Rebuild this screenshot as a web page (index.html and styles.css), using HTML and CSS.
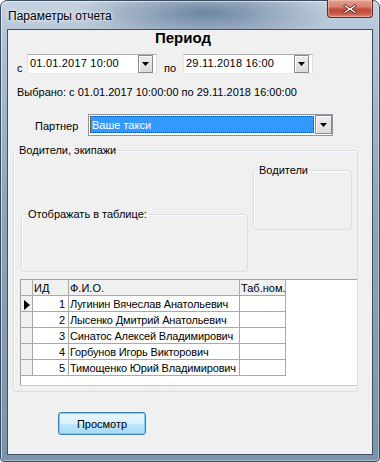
FILE: index.html
```html
<!DOCTYPE html>
<html lang="ru">
<head>
<meta charset="utf-8">
<title>Параметры отчета</title>
<link rel="stylesheet" href="styles.css">
</head>
<body>
<div class="window">
  <div class="titlebar">
    <span class="title">Параметры отчета</span>
    <div class="close">
      <svg width="16" height="12" viewBox="0 0 16 12"><path d="M3 1.5 L8 5 L13 1.5 L14.5 2.8 L10.2 6 L14.5 9.2 L13 10.5 L8 7 L3 10.5 L1.5 9.2 L5.8 6 L1.5 2.8 Z" fill="#fff" stroke="#4a1f1a" stroke-width="0.9" stroke-linejoin="round"/></svg>
    </div>
  </div>
  <div class="client">
    <div class="heading">Период</div>
    <div class="daterow">
      <span class="lbl lbl-from">с</span>
      <div class="picker">
        <span class="ptext">01.01.2017 10:00</span>
        <span class="dbtn"><svg width="7" height="4" viewBox="0 0 7 4"><path d="M0 0H7L3.5 4Z" fill="#000"/></svg></span>
      </div>
      <span class="lbl lbl-to">по</span>
      <div class="picker">
        <span class="ptext">29.11.2018 16:00</span>
        <span class="dbtn"><svg width="7" height="4" viewBox="0 0 7 4"><path d="M0 0H7L3.5 4Z" fill="#000"/></svg></span>
      </div>
    </div>
    <div class="selected">Выбрано: с 01.01.2017 10:00:00 по 29.11.2018 16:00:00</div>
    <div class="partnerrow">
      <span class="lbl lbl-partner">Партнер</span>
      <div class="combo">
        <span class="csel">Ваше такси</span>
        <span class="dbtn cbtn"><svg width="7" height="4" viewBox="0 0 7 4"><path d="M0 0H7L3.5 4Z" fill="#000"/></svg></span>
      </div>
    </div>
    <fieldset class="group main">
      <legend>Водители, экипажи</legend>
      <div class="upper">
        <fieldset class="group show">
          <legend>Отображать в таблице:</legend>
        </fieldset>
        <fieldset class="group drivers">
          <legend>Водители</legend>
        </fieldset>
      </div>
      <div class="grid">
        <div class="tbl">
          <div class="c hd ind"></div><div class="c hd">ИД</div><div class="c hd">Ф.И.О.</div><div class="c hd">Таб.ном.</div>
          <div class="c ind"><svg width="6" height="10" viewBox="0 0 6 10"><path d="M0 0L6 5L0 10Z" fill="#000"/></svg></div><div class="c num">1</div><div class="c name">Лугинин Вячеслав Анатольевич</div><div class="c"></div>
          <div class="c ind"></div><div class="c num">2</div><div class="c name">Лысенко Дмитрий Анатольевич</div><div class="c"></div>
          <div class="c ind"></div><div class="c num">3</div><div class="c name">Синатос Алексей Владимирович</div><div class="c"></div>
          <div class="c ind"></div><div class="c num">4</div><div class="c name">Горбунов Игорь Викторович</div><div class="c"></div>
          <div class="c ind"></div><div class="c num">5</div><div class="c name">Тимощенко Юрий Владимирович</div><div class="c"></div>
        </div>
      </div>
    </fieldset>
    <button class="btn">Просмотр</button>
  </div>
</div>
</body>
</html>
```
FILE: styles.css
```css
html, body {
  margin: 0;
  padding: 0;
}
body {
  width: 380px;
  height: 462px;
  overflow: hidden;
  font-family: "Liberation Sans", Arial, sans-serif;
  font-size: 11px;
  color: #000;
  background: #fff;
}
.window {
  box-sizing: border-box;
  width: 380px;
  height: 462px;
  border: 1px solid #3b4c5f;
  border-radius: 7px 7px 4px 4px;
  padding: 0 6px 6px 6px;
  display: flex;
  flex-direction: column;
  background:
    radial-gradient(ellipse 130px 30px at 205px 12px, rgba(100,125,155,0.9), rgba(100,125,155,0)),
    linear-gradient(to bottom, #c6d3e0 0px, #b0c2d4 40px, #8ea5bc 200px, #7b93ab 100%);
  box-shadow: inset 1px 1px 0 rgba(255,255,255,0.55), inset -1px -1px 0 rgba(255,255,255,0.35);
}
.titlebar {
  height: 28px;
  display: flex;
  justify-content: space-between;
  align-items: flex-start;
  padding-left: 1px;
}
.title {
  font-size: 12px;
  line-height: 14px;
  padding-top: 8px;
  color: #000;
  text-shadow: 0 0 6px rgba(255,255,255,0.9), 0 0 3px rgba(255,255,255,0.8);
}
.close {
  box-sizing: border-box;
  width: 46px;
  height: 18px;
  margin-top: -1px;
  border: 1px solid #5b2a24;
  border-top: none;
  border-radius: 0 0 4px 4px;
  background: linear-gradient(to bottom, #e3a093 0%, #d88072 40%, #c24a39 55%, #c9584a 80%, #dd8a7b 100%);
  box-shadow: inset 0 0 0 1px rgba(255,210,200,0.45);
  display: flex;
  align-items: center;
  justify-content: center;
}
.client {
  flex: 1;
  box-sizing: border-box;
  border: 1px solid #3d5064;
  background: #f0f0f0;
  display: flex;
  flex-direction: column;
  align-items: flex-start;
}
.heading {
  align-self: stretch;
  font-size: 15px;
  font-weight: bold;
  line-height: 16px;
  padding-left: 147px;
}
.daterow {
  display: flex;
  align-items: flex-start;
  margin-top: 8px;
  height: 20px;
}
.lbl {
  line-height: 14px;
  box-sizing: border-box;
}
.lbl-from {
  width: 19px;
  padding-left: 9px;
  margin-top: 7px;
}
.lbl-to {
  width: 26px;
  padding-left: 7px;
  margin-top: 7px;
}
.picker {
  box-sizing: border-box;
  width: 130px;
  height: 20px;
  border: 1px solid;
  border-color: #abadb3 #dbdfe6 #e3e9ef #e2e3ea;
  background: #fff;
  display: flex;
  align-items: flex-start;
}
.ptext {
  line-height: 14px;
  padding: 1px 0 0 2px;
  letter-spacing: 0.2px;
}
.dbtn {
  box-sizing: border-box;
  margin-left: auto;
  margin-right: 3px;
  width: 15px;
  height: 18px;
  border: 1px solid #8a8a8a;
  background: linear-gradient(to bottom, #ececec, #dcdcdc);
  box-shadow: inset 1px 1px 0 #fff;
  display: flex;
  align-items: center;
  justify-content: center;
}
.selected {
  margin-top: 11px;
  line-height: 14px;
  padding-left: 9px;
}
.partnerrow {
  display: flex;
  align-items: flex-start;
  margin-top: 15px;
}
.lbl-partner {
  width: 80px;
  padding-left: 27px;
  margin-top: 5px;
}
.combo {
  box-sizing: border-box;
  width: 245px;
  height: 22px;
  border: 1px solid #8e959e;
  background: #fff;
  display: flex;
  align-items: flex-start;
}
.csel {
  box-sizing: border-box;
  margin: 1px 0 0 1px;
  width: 224px;
  height: 17px;
  border: 1px dotted #4a3a20;
  background: #3399ff;
  color: #fff;
  line-height: 14px;
  padding: 1px 0 0 1px;
}
.cbtn {
  margin: 0 0 0 1px;
  width: 17px;
  height: 19px;
}
fieldset.group {
  margin: 0;
  padding: 0;
  min-width: 0;
  box-sizing: border-box;
  border: 1px solid #d5dfe5;
  border-radius: 3px;
  box-shadow: inset 1px 1px 0 #fff;
}
fieldset.group legend {
  padding: 0 1px;
  margin-left: 4px;
  line-height: 13px;
  font-size: 11px;
}
.main {
  margin: 8px 0 0 5px !important;
  width: 345px;
  height: 248px;
}
.upper {
  display: flex;
  align-items: flex-start;
  height: 115px;
}
.show {
  margin: 51px 0 0 7px !important;
  width: 227px;
  height: 64px;
}
.show legend {
  margin-left: 5px !important;
}
.drivers {
  margin: 7px 0 0 5px !important;
  width: 99px;
  height: 66px;
}
.grid {
  box-sizing: border-box;
  margin: 7px 0 5px 6px;
  width: 337px;
  height: 107px;
  background: #fff;
  border: 1px solid #a0a0a0;
  border-right: none;
  border-bottom-color: #c8c8c8;
}
.tbl {
  display: grid;
  grid-template-columns: 12px 36px 171px 46px;
  grid-auto-rows: 16px;
}
.c {
  box-sizing: border-box;
  border-right: 1px solid #a9a9a9;
  border-bottom: 1px solid #a9a9a9;
  line-height: 14px;
  padding: 1px 0 0 1px;
  white-space: nowrap;
  overflow: hidden;
}
.name {
  letter-spacing: -0.15px;
}
.hd, .ind {
  background: #f0f0f0;
}
.ind {
  padding: 3px 0 0 3px;
}
.num {
  text-align: right;
  padding-right: 3px;
}
.btn {
  box-sizing: border-box;
  margin: 20px 0 0 50px;
  width: 88px;
  height: 23px;
  padding: 0;
  font-family: "Liberation Sans", Arial, sans-serif;
  font-size: 11px;
  color: #000;
  border: 1px solid #3c7fb1;
  border-radius: 3px;
  background: linear-gradient(to bottom, #eaf6fd 0%, #d9f0fc 50%, #bee6fd 51%, #a7d9f5 100%);
  box-shadow: inset 0 0 0 1px #6fd3f7;
}
```
